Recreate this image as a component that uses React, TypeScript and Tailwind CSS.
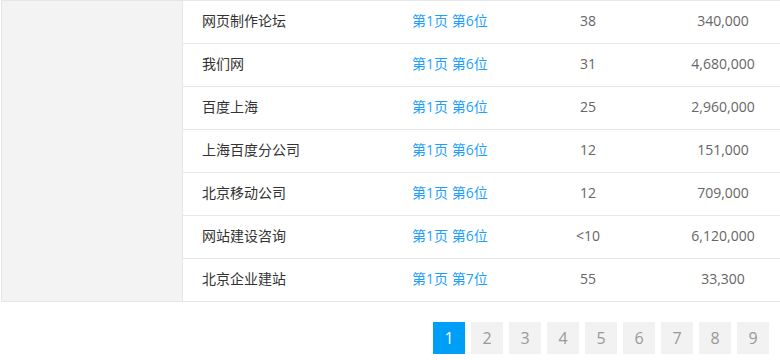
const rows = [
  { name: "网页制作论坛", rank: "第1页 第6位", count: "38", volume: "340,000" },
  { name: "我们网", rank: "第1页 第6位", count: "31", volume: "4,680,000" },
  { name: "百度上海", rank: "第1页 第6位", count: "25", volume: "2,960,000" },
  { name: "上海百度分公司", rank: "第1页 第6位", count: "12", volume: "151,000" },
  { name: "北京移动公司", rank: "第1页 第6位", count: "12", volume: "709,000" },
  { name: "网站建设咨询", rank: "第1页 第6位", count: "<10", volume: "6,120,000" },
  { name: "北京企业建站", rank: "第1页 第7位", count: "55", volume: "33,300" },
];

const pages = [1, 2, 3, 4, 5, 6, 7, 8, 9];

export default function App() {
  return (
    <div
      className="w-[780px] h-[360px] bg-white overflow-hidden text-[14px]"
      style={{ fontFamily: '"Open Sans", "Noto Sans CJK SC", sans-serif' }}
    >
      {/* Table block */}
      <div className="ml-[1px] flex border-t border-b border-l border-[#e6e6e6]">
        <div className="w-[181px] shrink-0 bg-[#f3f3f3] border-r border-[#e6e6e6]" />
        <div className="flex-1">
          {rows.map((r, i) => (
            <div
              key={i}
              className={`flex items-center pb-[3px] leading-[20px] ${i > 0 ? "h-[43px] border-t border-[#e6e6e6]" : "h-[42px]"}`}
            >
              <div className="w-[209px] pl-[19px] text-[#333]">{r.name}</div>
              <div className="w-[119px] pl-[20px] text-[#1e9fff]">{r.rank}</div>
              <div className="w-[154px] text-center text-[#666]">{r.count}</div>
              <div className="w-[116px] text-center text-[#666]">{r.volume}</div>
            </div>
          ))}
        </div>
      </div>

      {/* Pagination */}
      <div className="flex justify-end gap-[6px] pr-[11px] mt-[20px]">
        {pages.map((p) => (
          <div
            key={p}
            className={`w-[32px] h-[32px] flex items-center justify-center text-[16px] ${
              p === 1 ? "bg-[#009ff7] text-white" : "bg-[#f2f2f2] text-[#999]"
            }`}
          >
            {p}
          </div>
        ))}
      </div>
    </div>
  );
}
